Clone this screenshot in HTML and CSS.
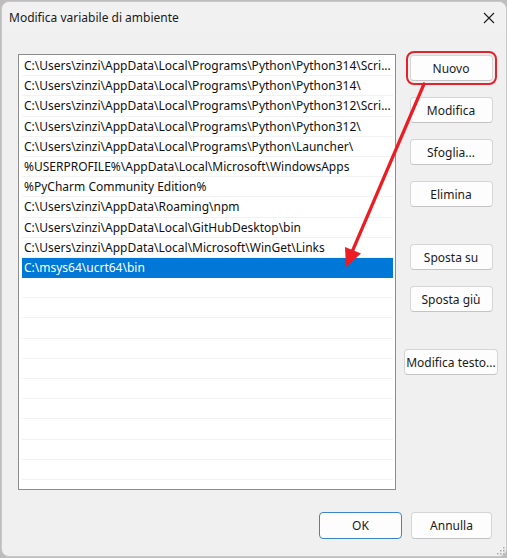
FILE: index.html
```html
<!DOCTYPE html>
<html lang="it">
<head>
<meta charset="utf-8">
<title>Modifica variabile di ambiente</title>
<link rel="stylesheet" href="styles.css">
</head>
<body>
<div class="window">
  <div class="titlebar">
    <span class="title">Modifica variabile di ambiente</span>
    <button class="close" aria-label="Chiudi">
      <svg width="12" height="12" viewBox="0 0 12 12"><path d="M1 1 L11 11 M11 1 L1 11" stroke="#1b1b1b" stroke-width="1.1" fill="none"/></svg>
    </button>
  </div>

  <div class="content">
    <ul class="list">
      <li class="row">C:\Users\zinzi\AppData\Local\Programs\Python\Python314\Scri...</li>
      <li class="row">C:\Users\zinzi\AppData\Local\Programs\Python\Python314\</li>
      <li class="row">C:\Users\zinzi\AppData\Local\Programs\Python\Python312\Scri...</li>
      <li class="row">C:\Users\zinzi\AppData\Local\Programs\Python\Python312\</li>
      <li class="row">C:\Users\zinzi\AppData\Local\Programs\Python\Launcher\</li>
      <li class="row">%USERPROFILE%\AppData\Local\Microsoft\WindowsApps</li>
      <li class="row">%PyCharm Community Edition%</li>
      <li class="row">C:\Users\zinzi\AppData\Roaming\npm</li>
      <li class="row">C:\Users\zinzi\AppData\Local\GitHubDesktop\bin</li>
      <li class="row">C:\Users\zinzi\AppData\Local\Microsoft\WinGet\Links</li>
      <li class="row selected">C:\msys64\ucrt64\bin</li>
      <li class="row"></li>
      <li class="row"></li>
      <li class="row"></li>
      <li class="row"></li>
      <li class="row"></li>
      <li class="row"></li>
      <li class="row"></li>
      <li class="row"></li>
      <li class="row"></li>
      <li class="row"></li>
    </ul>

    <div class="actions">
      <button class="btn highlighted">Nuovo</button>
      <button class="btn">Modifica</button>
      <button class="btn">Sfoglia...</button>
      <button class="btn">Elimina</button>
      <button class="btn group-start">Sposta su</button>
      <button class="btn">Sposta giù</button>
      <button class="btn wide group-start">Modifica testo...</button>
    </div>
  </div>

  <div class="footer">
    <button class="btn default">OK</button>
    <button class="btn cancel">Annulla</button>
  </div>

  <svg class="grip" width="8" height="8" viewBox="0 0 8 8">
    <g fill="#a8a8a8">
      <rect x="6" y="0" width="1.5" height="1.5"/>
      <rect x="3" y="3" width="1.5" height="1.5"/>
      <rect x="6" y="3" width="1.5" height="1.5"/>
      <rect x="0" y="6" width="1.5" height="1.5"/>
      <rect x="3" y="6" width="1.5" height="1.5"/>
      <rect x="6" y="6" width="1.5" height="1.5"/>
    </g>
  </svg>

  <!-- annotation arrow from the "Nuovo" button down to the selected entry -->
  <svg class="arrow" width="507" height="558" viewBox="0 0 507 558">
    <line x1="424" y1="84" x2="352" y2="252" stroke="#ec1c24" stroke-width="3.2" stroke-linecap="round"/>
    <polygon points="346,267 345,247 361,253.5" fill="#ec1c24"/>
  </svg>
</div>
</body>
</html>
```

FILE: styles.css
```css
* {
  box-sizing: border-box;
}

html, body {
  margin: 0;
  padding: 0;
  background: #bdbdbd;
  width: 507px;
  height: 558px;
  overflow: hidden;
}

body {
  font-family: "Noto Sans", "Segoe UI", sans-serif;
  font-size: 12px;
  color: #000;
}

.window {
  position: relative;
  margin: 1px 0 0 1px;
  width: 506px;
  height: 556px;
  background: #f0f0f0;
  border: 1px solid #c9c9c9;
  border-radius: 8px;
  display: flex;
  flex-direction: column;
}

.titlebar {
  height: 30px;
  display: flex;
  align-items: center;
  justify-content: space-between;
  padding: 0 8px 0 7px;
  background: #f1f1f1;
  border-radius: 8px 8px 0 0;
}

.title {
  font-size: 12px;
  color: #1a1a1a;
}

.close {
  border: 0;
  background: transparent;
  padding: 0;
  width: 14px;
  height: 14px;
  display: flex;
  align-items: center;
  justify-content: center;
  margin-right: 2px;
  margin-top: 1px;
}

.content {
  display: flex;
  padding: 22px 0 0 16px;
}

.list {
  list-style: none;
  margin: 0;
  padding: 1px 2px 0 3px;
  width: 378px;
  height: 436px;
  background: #fff;
  border: 1px solid #8d8d8d;
  overflow: hidden;
}

.row {
  height: 20.2px;
  line-height: 19px;
  padding-left: 2px;
  border-bottom: 1px solid #f2f2f2;
  white-space: nowrap;
  overflow: hidden;
  color: #111;
}

.row.selected {
  background: #0078d7;
  color: #fff;
  border-bottom-color: #0078d7;
}

.actions {
  width: 100px;
  margin-left: 5px;
  display: flex;
  flex-direction: column;
  align-items: center;
  gap: 16px;
  padding-top: 1px;
}

.btn {
  font-family: inherit;
  font-size: 12px;
  color: #1b1b1b;
  width: 83px;
  height: 26px;
  padding: 0;
  background: #fdfdfd;
  border: 1px solid #d5d5d5;
  border-bottom-color: #c4c4c4;
  border-radius: 4px;
}

.btn.wide {
  width: 94px;
}

.btn.group-start {
  margin-top: 21px;
}

.btn.highlighted {
  outline: 2px solid #e3232c;
  outline-offset: 2px;
}

.footer {
  display: flex;
  justify-content: flex-end;
  gap: 9px;
  padding: 22px 14px 0 0;
}

.footer .btn {
  height: 27px;
}

.btn.cancel {
  width: 81px;
}

.btn.default {
  border: 1px solid #3a86c8;
}

.grip {
  position: absolute;
  right: 1px;
  bottom: 1px;
}

.arrow {
  position: absolute;
  left: -2px;
  top: -2px;
  pointer-events: none;
}
```
